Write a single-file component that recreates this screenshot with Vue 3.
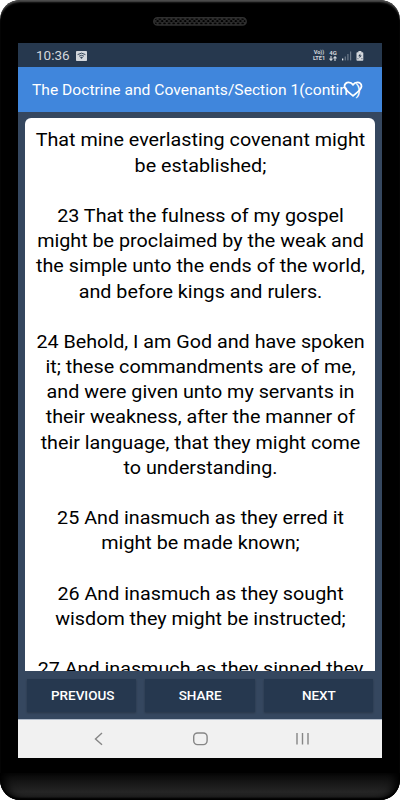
<script setup>
import { ref } from 'vue';

const title = ref('The Doctrine and Covenants/Section 1(contin\u00a0\u00a0)');
const liked = ref(false);

const verses = [
  ['That mine everlasting covenant might', 'be established;'],
  [
    '23 That the fulness of my gospel',
    'might be proclaimed by the weak and',
    'the simple unto the ends of the world,',
    'and before kings and rulers.',
  ],
  [
    '24 Behold, I am God and have spoken',
    'it; these commandments are of me,',
    'and were given unto my servants in',
    'their weakness, after the manner of',
    'their language, that they might come',
    'to understanding.',
  ],
  ['25 And inasmuch as they erred it', 'might be made known;'],
  ['26 And inasmuch as they sought', 'wisdom they might be instructed;'],
  ['27 And inasmuch as they sinned they'],
];

const buttons = ['PREVIOUS', 'SHARE', 'NEXT'];
</script>

<template>
  <div class="phone">
    <div class="top">
      <svg class="speaker" width="94" height="9" viewBox="0 0 94 9">
        <defs>
          <pattern id="mesh" width="4.6" height="5" patternUnits="userSpaceOnUse">
            <rect width="4.6" height="5" fill="#2c2c2c" />
            <circle cx="2.3" cy="1.8" r="1.3" fill="#000" />
            <circle cx="0" cy="4.2" r="1.2" fill="#000" />
            <circle cx="4.6" cy="4.2" r="1.2" fill="#000" />
          </pattern>
        </defs>
        <rect x="0.8" y="0.8" width="92.4" height="7.2" rx="3.6" fill="url(#mesh)" stroke="#303030" stroke-width="1.5" />
      </svg>
    </div>

    <div class="screen">
      <div class="status">
        <span class="clock">10:36</span>
        <svg class="wifi" width="11" height="10" viewBox="0 0 11 10">
          <rect width="11" height="10" rx="0.8" fill="#d3d7dc" />
          <path d="M1.6 3.6Q5.5 .7 9.4 3.6M3.1 5.2Q5.5 3.4 7.9 5.2" fill="none" stroke="#35475b" stroke-width="1" />
          <path d="M4 6.2Q5.5 5.2 7 6.2L5.5 8z" fill="#35475b" />
        </svg>
        <div class="right">
          <div class="tiny volte"><span>Vo))</span><span>LTE1</span></div>
          <div class="tiny net">
            <span>4G</span>
            <svg width="8" height="5" viewBox="0 0 8 5">
              <path d="M2 0v4M.5 2.7L2 4.3 3.5 2.7M6 5V1M4.5 2.3L6 .7 7.5 2.3" fill="none" stroke="#d3d7dc" stroke-width="1.1" />
            </svg>
          </div>
          <svg class="signal" width="10" height="10" viewBox="0 0 10 10">
            <rect x="0" y="7.5" width="1.3" height="1.9" fill="#e6e9ec" />
            <rect x="2.7" y="5.5" width="1.2" height="3.9" fill="#6d7b8b" />
            <rect x="5.3" y="3" width="1.2" height="6.4" fill="#6d7b8b" />
            <rect x="8" y="0.5" width="1.2" height="8.9" fill="#6d7b8b" />
          </svg>
          <svg class="battery" width="8" height="10" viewBox="0 0 8 10">
            <path d="M2.4 0h3v1.3h1.1q.8 0 .8.8v6.9q0 .8-.8.8H1.3q-.8 0-.8-.8V2.1q0-.8.8-.8h1.1z" fill="#d3d7dc" />
            <path d="M4.4 2.4L2.2 5.2h1.6L3.3 7.2l2.5-2.8H4.2z" fill="#26384e" />
            <path d="M1.2 7.7h1.4M5.2 7.7h1.4" stroke="#26384e" stroke-width=".6" />
          </svg>
        </div>
      </div>

      <div class="bar">
        <span class="title">{{ title }}</span>
        <button class="like" @click="liked = !liked">
          <svg width="20" height="17" viewBox="0 0 20 17">
            <path
              d="M10 14.9L8.2 13.4C4 9.9 1.5 7.9 1.5 5.2 1.5 3 3.3 1.4 5.6 1.4c1.7 0 3.4.9 4.4 2.3 1-1.4 2.7-2.3 4.4-2.3 2.3 0 4.1 1.6 4.1 3.8 0 2.7-2.5 4.7-6.7 8.2z"
              :fill="liked ? '#fff' : 'none'"
              stroke="#fff"
              stroke-width="1.8"
            />
          </svg>
        </button>
      </div>

      <div class="content">
        <div class="card">
          <p v-for="(verse, i) in verses" :key="i" class="verse">
            <span v-for="line in verse" :key="line" class="line">{{ line }}</span>
          </p>
        </div>
        <div class="actions">
          <button v-for="name in buttons" :key="name" class="action"><span>{{ name }}</span></button>
        </div>
      </div>

      <div class="nav">
        <svg width="364" height="38" viewBox="0 0 364 38" fill="none" stroke="#868686" stroke-width="1.4">
          <path d="M84 13.1L77.5 18.9 84 24.7" />
          <rect x="175.7" y="13" width="13.4" height="11.6" rx="3.8" />
          <path d="M279 13v11.6M284.5 13v11.6M290 13v11.6" />
        </svg>
      </div>
    </div>
    <div class="chin"></div>
  </div>
</template>

<style scoped>
.phone {
  width: 400px;
  height: 800px;
  box-sizing: border-box;
  display: flex;
  flex-direction: column;
  align-items: center;
  background: #000;
  border-radius: 20px;
  overflow: hidden;
  box-shadow: inset 0 3px 2px -1px #505050;
  font-family: Roboto, "Liberation Sans", sans-serif;
}

button {
  border: 0;
  padding: 0;
  background: none;
  font-family: inherit;
}

.top {
  height: 43px;
  flex: none;
}

.speaker {
  display: block;
  margin-top: 17px;
}

.screen {
  width: 364px;
  height: 715px;
  flex: none;
  display: flex;
  flex-direction: column;
}

.status {
  height: 24px;
  flex: none;
  display: flex;
  align-items: center;
  box-sizing: border-box;
  padding: 1px 18px 0;
  background: #26384e;
  color: #d3d7dc;
}

.clock {
  font-size: 12.5px;
  width: 40px;
  transform: scaleX(1.08);
  transform-origin: left;
}

.right {
  margin-left: auto;
  display: flex;
  align-items: center;
}

.tiny {
  display: flex;
  flex-direction: column;
  align-items: center;
  height: 11px;
  font-size: 5.6px;
  line-height: 5.5px;
  font-weight: 700;
}

.volte {
  width: 14px;
  margin-right: 3px;
}

.net {
  width: 8px;
  margin-right: 5px;
  font-size: 6px;
}

.signal {
  margin-right: 4px;
}

.bar {
  height: 45px;
  flex: none;
  display: flex;
  align-items: center;
  position: relative;
  background: #4086dc;
  color: #fff;
}

.title {
  margin-left: 14.4px;
  padding-top: 1px;
  font-size: 14.3px;
  white-space: nowrap;
  transform: scaleX(1.093);
  transform-origin: left;
}

.like {
  position: absolute;
  right: 19px;
  top: 14px;
  height: 17px;
}

.like svg {
  display: block;
}

.content {
  flex: 1;
  min-height: 0;
  display: flex;
  flex-direction: column;
  box-sizing: border-box;
  padding: 6px 7px 0;
  background: #35475f;
}

.card {
  height: 553px;
  flex: none;
  box-sizing: border-box;
  padding: 9.4px 0 0 1px;
  overflow: hidden;
  background: #fff;
  border-radius: 6px 6px 0 0;
  color: #000;
  text-align: center;
}

.verse {
  margin: 0 0 25.19px;
  font-size: 18.2px;
  line-height: 25.19px;
  transform: scaleX(1.085);
}

.line {
  display: block;
  white-space: nowrap;
}

.actions {
  display: flex;
  gap: 9px;
  padding: 8px 2px 0;
}

.action {
  flex: 1;
  height: 33px;
  background: #26384f;
  color: #fff;
  font-size: 12.6px;
  font-weight: 500;
  box-shadow: 0 1px 2px rgba(0, 0, 0, 0.25);
}

.action span {
  display: inline-block;
  padding-left: 1px;
  transform: scaleX(1.07);
}

.nav {
  height: 38px;
  flex: none;
  background: #f1f1f1;
  border-top: 1px solid #b3bdcb;
}

.nav svg {
  display: block;
}

.chin {
  width: 400px;
  height: 27px;
  margin-top: 15px;
  flex: none;
  background: linear-gradient(#080808, #252525 70%, #202020);
  border-radius: 0 0 20px 20px;
  box-shadow: inset 8px 0 8px -3px #000, inset -8px 0 8px -3px #000, inset 0 -2px 2px #000;
}
</style>

<style>
body {
  background: #fff;
}
</style>
